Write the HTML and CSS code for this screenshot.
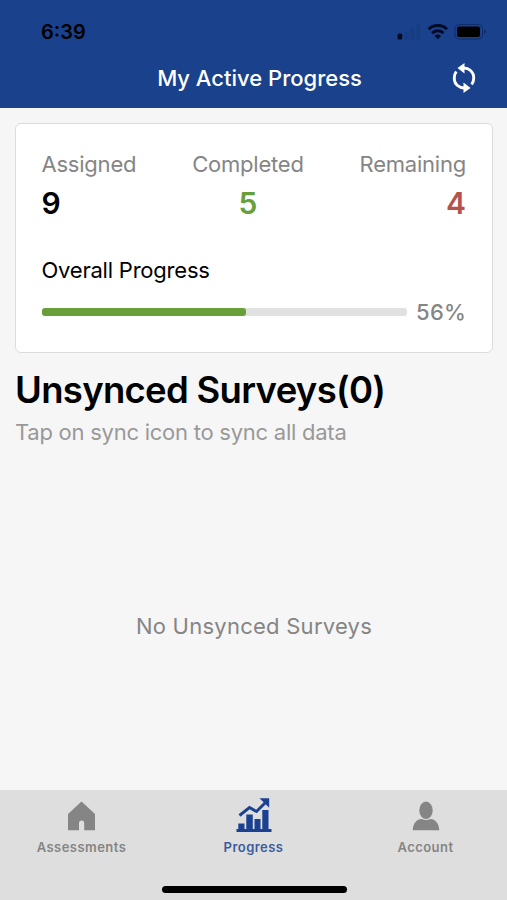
FILE: index.html
```html
<!DOCTYPE html>
<html lang="en">
<head>
<meta charset="utf-8">
<title>My Active Progress</title>
<link rel="stylesheet" href="styles.css">
</head>
<body>
<div class="app">
  <header class="header">
    <div class="status">
      <span class="time">6:39</span>
      <svg class="status-icons" width="90" height="20" viewBox="0 0 90 20">
        <rect x="0.500" y="12.500" width="4.800" height="6" rx="1.500" fill="#020a24"/>
        <g fill="#173c82"><rect x="7.500" y="10.500" width="4" height="8" rx="1"/><rect x="13.500" y="7" width="4" height="11.500" rx="1"/><rect x="19.500" y="3.500" width="4" height="15" rx="1"/></g>
        <g fill="none" stroke="#020a24" stroke-width="2.900"><path d="M31.600 8.300a13.200 13.200 0 0 1 18.400 0"/><path d="M35.100 12.100a8.200 8.200 0 0 1 11.400 0"/></g>
        <path d="M40.800 18.200l-3.200-3.300a4.700 4.700 0 0 1 6.400 0z" fill="#020a24"/>
        <rect x="58" y="3.500" width="27.500" height="14.500" rx="4" fill="none" stroke="#102d69"/>
        <rect x="60" y="5.500" width="23" height="10.500" rx="2" fill="#000"/>
        <path d="M87 8v5q2-1 2-2.500t-2-2.500z" fill="#102d69"/>
      </svg>
    </div>
    <div class="titlebar">
      <h1 class="title">My Active Progress</h1>
      <svg class="sync" width="32" height="32" viewBox="0 0 32 32" fill="#fff"><path d="M16.500 1L9.500 6l7 5.500z"/><path d="M15.500 31l7-5-7-5.500z"/><path d="M13.500 6.200C21 5 26 10 25.700 16.500c-.1 2.500-.8 4.300-2 6M18.500 25.800C11 27 6 22 6.300 15.500c.1-2.500.8-4.300 2-6" fill="none" stroke="#fff" stroke-width="2.900"/></svg>
    </div>
  </header>
  <main class="main">
    <section class="card">
      <div class="stats">
        <div class="stat"><span class="label">Assigned</span><strong class="value">9</strong></div>
        <div class="stat center"><span class="label">Completed</span><strong class="value green">5</strong></div>
        <div class="stat right"><span class="label">Remaining</span><strong class="value red">4</strong></div>
      </div>
      <div class="overall">Overall Progress</div>
      <div class="progress">
        <div class="track"><div class="fill" style="width:56%"></div></div>
        <span class="percent">56%</span>
      </div>
    </section>
    <h2 class="heading">Unsynced Surveys(0)</h2>
    <p class="hint">Tap on sync icon to sync all data</p>
    <p class="empty">No Unsynced Surveys</p>
  </main>
  <nav class="tabs">
    <a class="tab"><svg width="36" height="36" viewBox="0 0 36 36" fill="#858585"><path d="M17.500 3.500L31 16v16.200H20.200v-7a2.600 2.600 0 0 0-5.200 0v7H4V16z"/></svg><span>Assessments</span></a>
    <a class="tab active"><svg width="36" height="36" viewBox="0 0 36 36" fill="#1b4190"><path d="M.5 31h35v3H.5zM2.300 25.500h6.200V31H2.300zM10.300 16.500h6.500v15h-6.500zM18.500 21h6v10h-6zM26.300 12h6.200v19h-6.200z"/><path d="M3.500 17.500l10-8 7 4 9-9" fill="none" stroke="#1b4190" stroke-width="2.900"/><path d="M23.500.3h9.700V9.800z"/></svg><span>Progress</span></a>
    <a class="tab"><svg width="36" height="36" viewBox="0 0 36 36" fill="#858585"><ellipse cx="18" cy="12.300" rx="6.700" ry="8.700"/><path d="M4.700 32.200C5 25 9 21 13.500 21q4.500 2 9 0c4.500 0 8.500 4 8.800 11.200z"/></svg><span>Account</span></a>
  </nav>
  <div class="home"></div>
</div>
</body>
</html>
```

FILE: styles.css
```css
* { box-sizing: border-box; margin: 0; }
body { font-family: Inter, "Liberation Sans", sans-serif; }
.app { width: 507px; height: 900px; background: #f6f6f6; display: flex; flex-direction: column; position: relative; overflow: hidden; }
.header { height: 108px; background: #1a418c; }
.status { height: 56px; padding: 21px 20px 0 41px; display: flex; justify-content: space-between; }
.time { font-size: 20px; line-height: 22px; font-weight: 600; }
.titlebar { position: relative; text-align: center; color: #fff; padding-left: 12px; }
.title { font-size: 22px; line-height: 45px; font-weight: 550; letter-spacing: 0; }
.sync { position: absolute; right: 27px; top: 6px; }
.main { height: 682px; padding: 15px 14px 0 15px; }
.card { height: 230px; background: #fff; border: 1px solid #dcdcdc; border-radius: 6px; padding: 26px 26px 26px 25.500px; }
.stats { display: flex; justify-content: space-between; }
.stat { display: flex; flex-direction: column; align-items: flex-start; }
.center { align-items: center; }
.right { align-items: flex-end; }
.label { font-size: 22px; line-height: 28px; color: #858585; letter-spacing: -.22px; }
.value { font-size: 30px; line-height: 50px; font-weight: 600; }
.green { color: #689f38; }
.red { color: #b5524c; }
.overall { font-size: 22px; line-height: 28px; margin-top: 28px; letter-spacing: -.22px; }
.progress { display: flex; align-items: center; margin-top: 14px; }
.track { flex: 1; height: 8px; background: #e1e1e1; border-radius: 3px; margin-right: 9px; }
.fill { height: 8px; border-radius: 3px; background: #689f38; }
.percent { font-size: 22px; line-height: 28px; color: #858585; font-weight: 500; letter-spacing: .2px; }
.heading { font-size: 36.500px; line-height: 44px; margin-top: 15px; font-weight: 600; letter-spacing: -.7px; white-space: nowrap; }
.hint { font-size: 22px; line-height: 28px; margin-top: 6px; color: #999; letter-spacing: -.25px; }
.empty { font-size: 22px; line-height: 28px; margin-top: 166px; color: #858585; text-align: center; letter-spacing: .25px; }
.tabs { height: 110px; background: #dedede; display: grid; grid-template-columns: repeat(3, 172px); justify-content: center; padding-top: 8px; }
.tab { display: flex; flex-direction: column; align-items: center; gap: 4px; font-size: 13px; line-height: 18px; font-weight: 600; letter-spacing: .45px; color: #858585; }
.active { color: #3c5c9c; }
.home { position: absolute; left: 162px; bottom: 7px; width: 185px; height: 7px; border-radius: 4px; background: #000; }
```
